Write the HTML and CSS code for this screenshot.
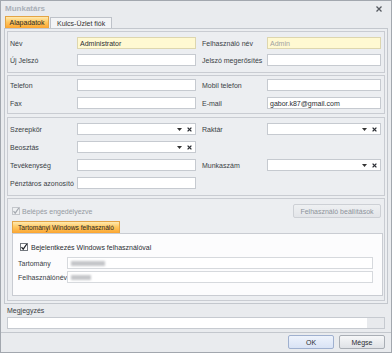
FILE: index.html
```html
<!DOCTYPE html>
<html lang="hu">
<head>
    <meta charset="UTF-8">
    <title>Munkatárs</title>
    <link rel="stylesheet" href="styles.css">
</head>
<body>
    <div class="window">
        <div class="titlebar">
            <span class="title">Munkatárs</span>
            <svg class="close" width="6" height="6" viewBox="0 0 6 6"><path d="M0.5 0.5L5.5 5.5M5.5 0.5L0.5 5.5" stroke="#55595f" stroke-width="1.3"/></svg>
        </div>

        <div class="tabs">
            <div class="tab active">Alapadatok</div>
            <div class="tab">Kulcs-Üzlet fiók</div>
        </div>

        <div class="page">
            <!-- felhasználó -->
            <div class="group g1">
                <div class="row">
                    <span class="lbl">Név</span>
                    <div class="field yellow">Administrator</div>
                    <span class="lbl lbl2">Felhasználó név</span>
                    <div class="field yellow wide2 dim">Admin</div>
                </div>
                <div class="row">
                    <span class="lbl">Új Jelszó</span>
                    <div class="field"></div>
                    <span class="lbl lbl2">Jelszó megerősítés</span>
                    <div class="field wide2"></div>
                </div>
            </div>

            <!-- elérhetőség -->
            <div class="group g2">
                <div class="row">
                    <span class="lbl">Telefon</span>
                    <div class="field"></div>
                    <span class="lbl lbl2">Mobil telefon</span>
                    <div class="field wide2"></div>
                </div>
                <div class="row">
                    <span class="lbl">Fax</span>
                    <div class="field"></div>
                    <span class="lbl lbl2">E-mail</span>
                    <div class="field wide2">gabor.k87@gmail.com</div>
                </div>
            </div>

            <!-- munkakör -->
            <div class="group g3">
                <div class="row">
                    <span class="lbl">Szerepkör</span>
                    <div class="field combo">
                        <svg width="5" height="3" viewBox="0 0 5 3"><path d="M0 0H5L2.5 3Z" fill="#333"/></svg>
                        <svg width="5" height="5" viewBox="0 0 5 5"><path d="M0.6 0.6L4.4 4.4M4.4 0.6L0.6 4.4" stroke="#2a2d33" stroke-width="1.3"/></svg>
                    </div>
                    <span class="lbl lbl2">Raktár</span>
                    <div class="field wide2 combo">
                        <svg width="5" height="3" viewBox="0 0 5 3"><path d="M0 0H5L2.5 3Z" fill="#333"/></svg>
                        <svg width="5" height="5" viewBox="0 0 5 5"><path d="M0.6 0.6L4.4 4.4M4.4 0.6L0.6 4.4" stroke="#2a2d33" stroke-width="1.3"/></svg>
                    </div>
                </div>
                <div class="row">
                    <span class="lbl">Beosztás</span>
                    <div class="field combo">
                        <svg width="5" height="3" viewBox="0 0 5 3"><path d="M0 0H5L2.5 3Z" fill="#333"/></svg>
                        <svg width="5" height="5" viewBox="0 0 5 5"><path d="M0.6 0.6L4.4 4.4M4.4 0.6L0.6 4.4" stroke="#2a2d33" stroke-width="1.3"/></svg>
                    </div>
                </div>
                <div class="row">
                    <span class="lbl">Tevékenység</span>
                    <div class="field"></div>
                    <span class="lbl lbl2">Munkaszám</span>
                    <div class="field wide2 combo">
                        <svg width="5" height="3" viewBox="0 0 5 3"><path d="M0 0H5L2.5 3Z" fill="#333"/></svg>
                        <svg width="5" height="5" viewBox="0 0 5 5"><path d="M0.6 0.6L4.4 4.4M4.4 0.6L0.6 4.4" stroke="#2a2d33" stroke-width="1.3"/></svg>
                    </div>
                </div>
                <div class="row">
                    <span class="lbl">Pénztáros azonosító</span>
                    <div class="field"></div>
                </div>
            </div>

            <!-- belépés -->
            <div class="group g4">
                <div class="login-top">
                    <label class="check off">
                        <span class="box"><svg width="8" height="8" viewBox="0 0 8 8"><path d="M1.5 4.2L3.2 6.2L6.8 1" fill="none" stroke="#a4a9b0" stroke-width="1.2"/></svg></span>
                        Belépés engedélyezve
                    </label>
                    <button class="btn-settings" disabled>Felhasználó beállítások</button>
                </div>
                <div class="subtabs">
                    <div class="tab active subtab">Tartományi Windows felhasználó</div>
                </div>
                <div class="subpage">
                    <label class="check">
                        <span class="box"><svg width="8" height="8" viewBox="0 0 8 8"><path d="M1.5 4.2L3.2 6.2L6.8 1" fill="none" stroke="#1e2126" stroke-width="1.2"/></svg></span>
                        Bejelentkezés Windows felhasználóval
                    </label>
                    <div class="subrow">
                        <span class="sublbl">Tartomány</span>
                        <div class="field subfield"><span class="blur" style="width:34px"></span></div>
                    </div>
                    <div class="subrow">
                        <span class="sublbl">Felhasználónév</span>
                        <div class="field subfield"><span class="blur" style="width:20px"></span></div>
                    </div>
                </div>
            </div>
        </div>

        <div class="note">
            <span class="note-lbl">Megjegyzés</span>
            <div class="field note-field"><span class="note-btn"></span></div>
        </div>

        <div class="footer">
            <button class="btn ok">OK</button>
            <button class="btn">Mégse</button>
        </div>
    </div>
</body>
</html>
```

FILE: styles.css
```css
* {
    margin: 0;
    padding: 0;
    box-sizing: border-box;
}

body {
    font-family: 'Liberation Sans', Arial, sans-serif;
    font-size: 7px;
    color: #3a3e45;
    background: #fff;
}

.window {
    width: 392px;
    height: 353px;
    border: 1px solid #a2a7ae;
    background: #e9ebee;
    display: flex;
    flex-direction: column;
}

.titlebar {
    height: 15px;
    display: flex;
    align-items: center;
    justify-content: space-between;
    padding: 0 9px 0 4px;
}

.title {
    font-weight: bold;
    font-size: 8px;
    color: #aab0b8;
}

.tabs {
    height: 12px;
    display: flex;
    align-items: flex-end;
    gap: 1px;
    margin-left: 4px;
}

.tab {
    height: 11px;
    padding: 0 6px;
    display: flex;
    align-items: center;
    white-space: nowrap;
    background: #f3f4f6;
    border: 1px solid #bec2c9;
    border-bottom: none;
    color: #333;
}

.tab.active {
    height: 12px;
    width: 44px;
    justify-content: center;
    background: linear-gradient(#ffeab0, #ffc860 45%, #fba531);
    border-color: #e4a444;
    color: #2a2a2a;
}

.page {
    margin: 0 3px;
    height: 276px;
    border: 1px solid #c3c7cd;
    background: #eceef1;
    padding: 2px;
    display: flex;
    flex-direction: column;
}

.group {
    border: 1px solid #c9ccd2;
    background: #eceef1;
    padding: 5px 3px 6px 2px;
    display: flex;
    flex-direction: column;
    gap: 6px;
}

.g1 { gap: 5px; }
.g2 { margin-top: 2px; padding-top: 3px; padding-bottom: 4px; }
.g3 { margin-top: 3px; }
.g4 { margin-top: 2px; flex: 1; gap: 0; padding: 5px 2px 4px 4px; }

.row {
    display: flex;
    align-items: center;
    height: 12px;
}

.lbl {
    width: 67px;
    white-space: nowrap;
}

.lbl2 {
    width: 65px;
    margin-left: 6px;
}

.field {
    width: 119px;
    height: 12px;
    border: 1px solid #c6cad0;
    background: #fff;
    padding-left: 2px;
    display: flex;
    align-items: center;
    color: #2a2d33;
}

.field.wide2 { width: 114px; }

.field.yellow {
    background: #fff9d2;
    border-color: #ddd6ae;
}

.field.dim { color: #a2a2a2; }

.combo {
    justify-content: flex-end;
    gap: 5px;
    padding-right: 3px;
}

.login-top {
    height: 14px;
    display: flex;
    align-items: center;
    justify-content: space-between;
    padding-right: 1px;
}

.check {
    display: flex;
    align-items: center;
    gap: 2px;
    color: #2a2d33;
}

.check.off { color: #959aa1; }

.box {
    width: 8px;
    height: 8px;
    display: flex;
    border: 1px solid #74797f;
    background: #fff;
}

.check.off .box {
    border-color: #c3c6cb;
    background: #eef0f2;
}

.box svg { margin: -1px; }

.btn-settings {
    width: 88px;
    height: 14px;
    font: inherit;
    color: #8d939b;
    background: linear-gradient(#eef0f2, #e3e5e9);
    border: 1px solid #cdd0d5;
    border-radius: 2px;
}

.subtabs {
    display: flex;
    margin-top: 3px;
}

.subtab.active {
    width: 108px;
    padding: 0 3px;
    font-size: 6.6px;
}

.subpage {
    width: 371px;
    flex: 1;
    border: 1px solid #c9ccd2;
    background: #fcfcfd;
    padding: 9px 0 0 5px;
    display: flex;
    flex-direction: column;
    gap: 2px;
}

.subpage .check {
    margin-left: 2px;
    margin-bottom: 4px;
    gap: 3px;
}

.subrow {
    display: flex;
    align-items: center;
    height: 12px;
}

.sublbl {
    width: 49px;
    white-space: nowrap;
}

.subfield {
    width: 306px;
    border-color: #d6d9dd;
    padding-left: 3px;
}

.blur {
    height: 5px;
    background: #c4c6c9;
    filter: blur(1.2px);
}

.note {
    padding: 3px 6px 0;
    display: flex;
    flex-direction: column;
    gap: 2px;
}

.note-lbl {
    height: 8px;
    line-height: 8px;
}

.note-field {
    width: 378px;
    justify-content: flex-end;
    padding: 0;
}

.note-btn {
    width: 17px;
    height: 10px;
    background: #e8eaed;
}

.footer {
    margin-top: 3px;
    border-top: 1px solid #c3c7cd;
    padding: 2px 6px 0 0;
    display: flex;
    justify-content: flex-end;
    gap: 5px;
}

.btn {
    width: 46px;
    height: 14px;
    font: inherit;
    color: #2a2d33;
    background: linear-gradient(#f6f7f8, #dfe2e6);
    border: 1px solid #a9aeb5;
    border-radius: 2px;
}

.btn.ok {
    background: linear-gradient(#eef3fc, #d9e3f5);
    border-color: #9fb0cf;
}
```
